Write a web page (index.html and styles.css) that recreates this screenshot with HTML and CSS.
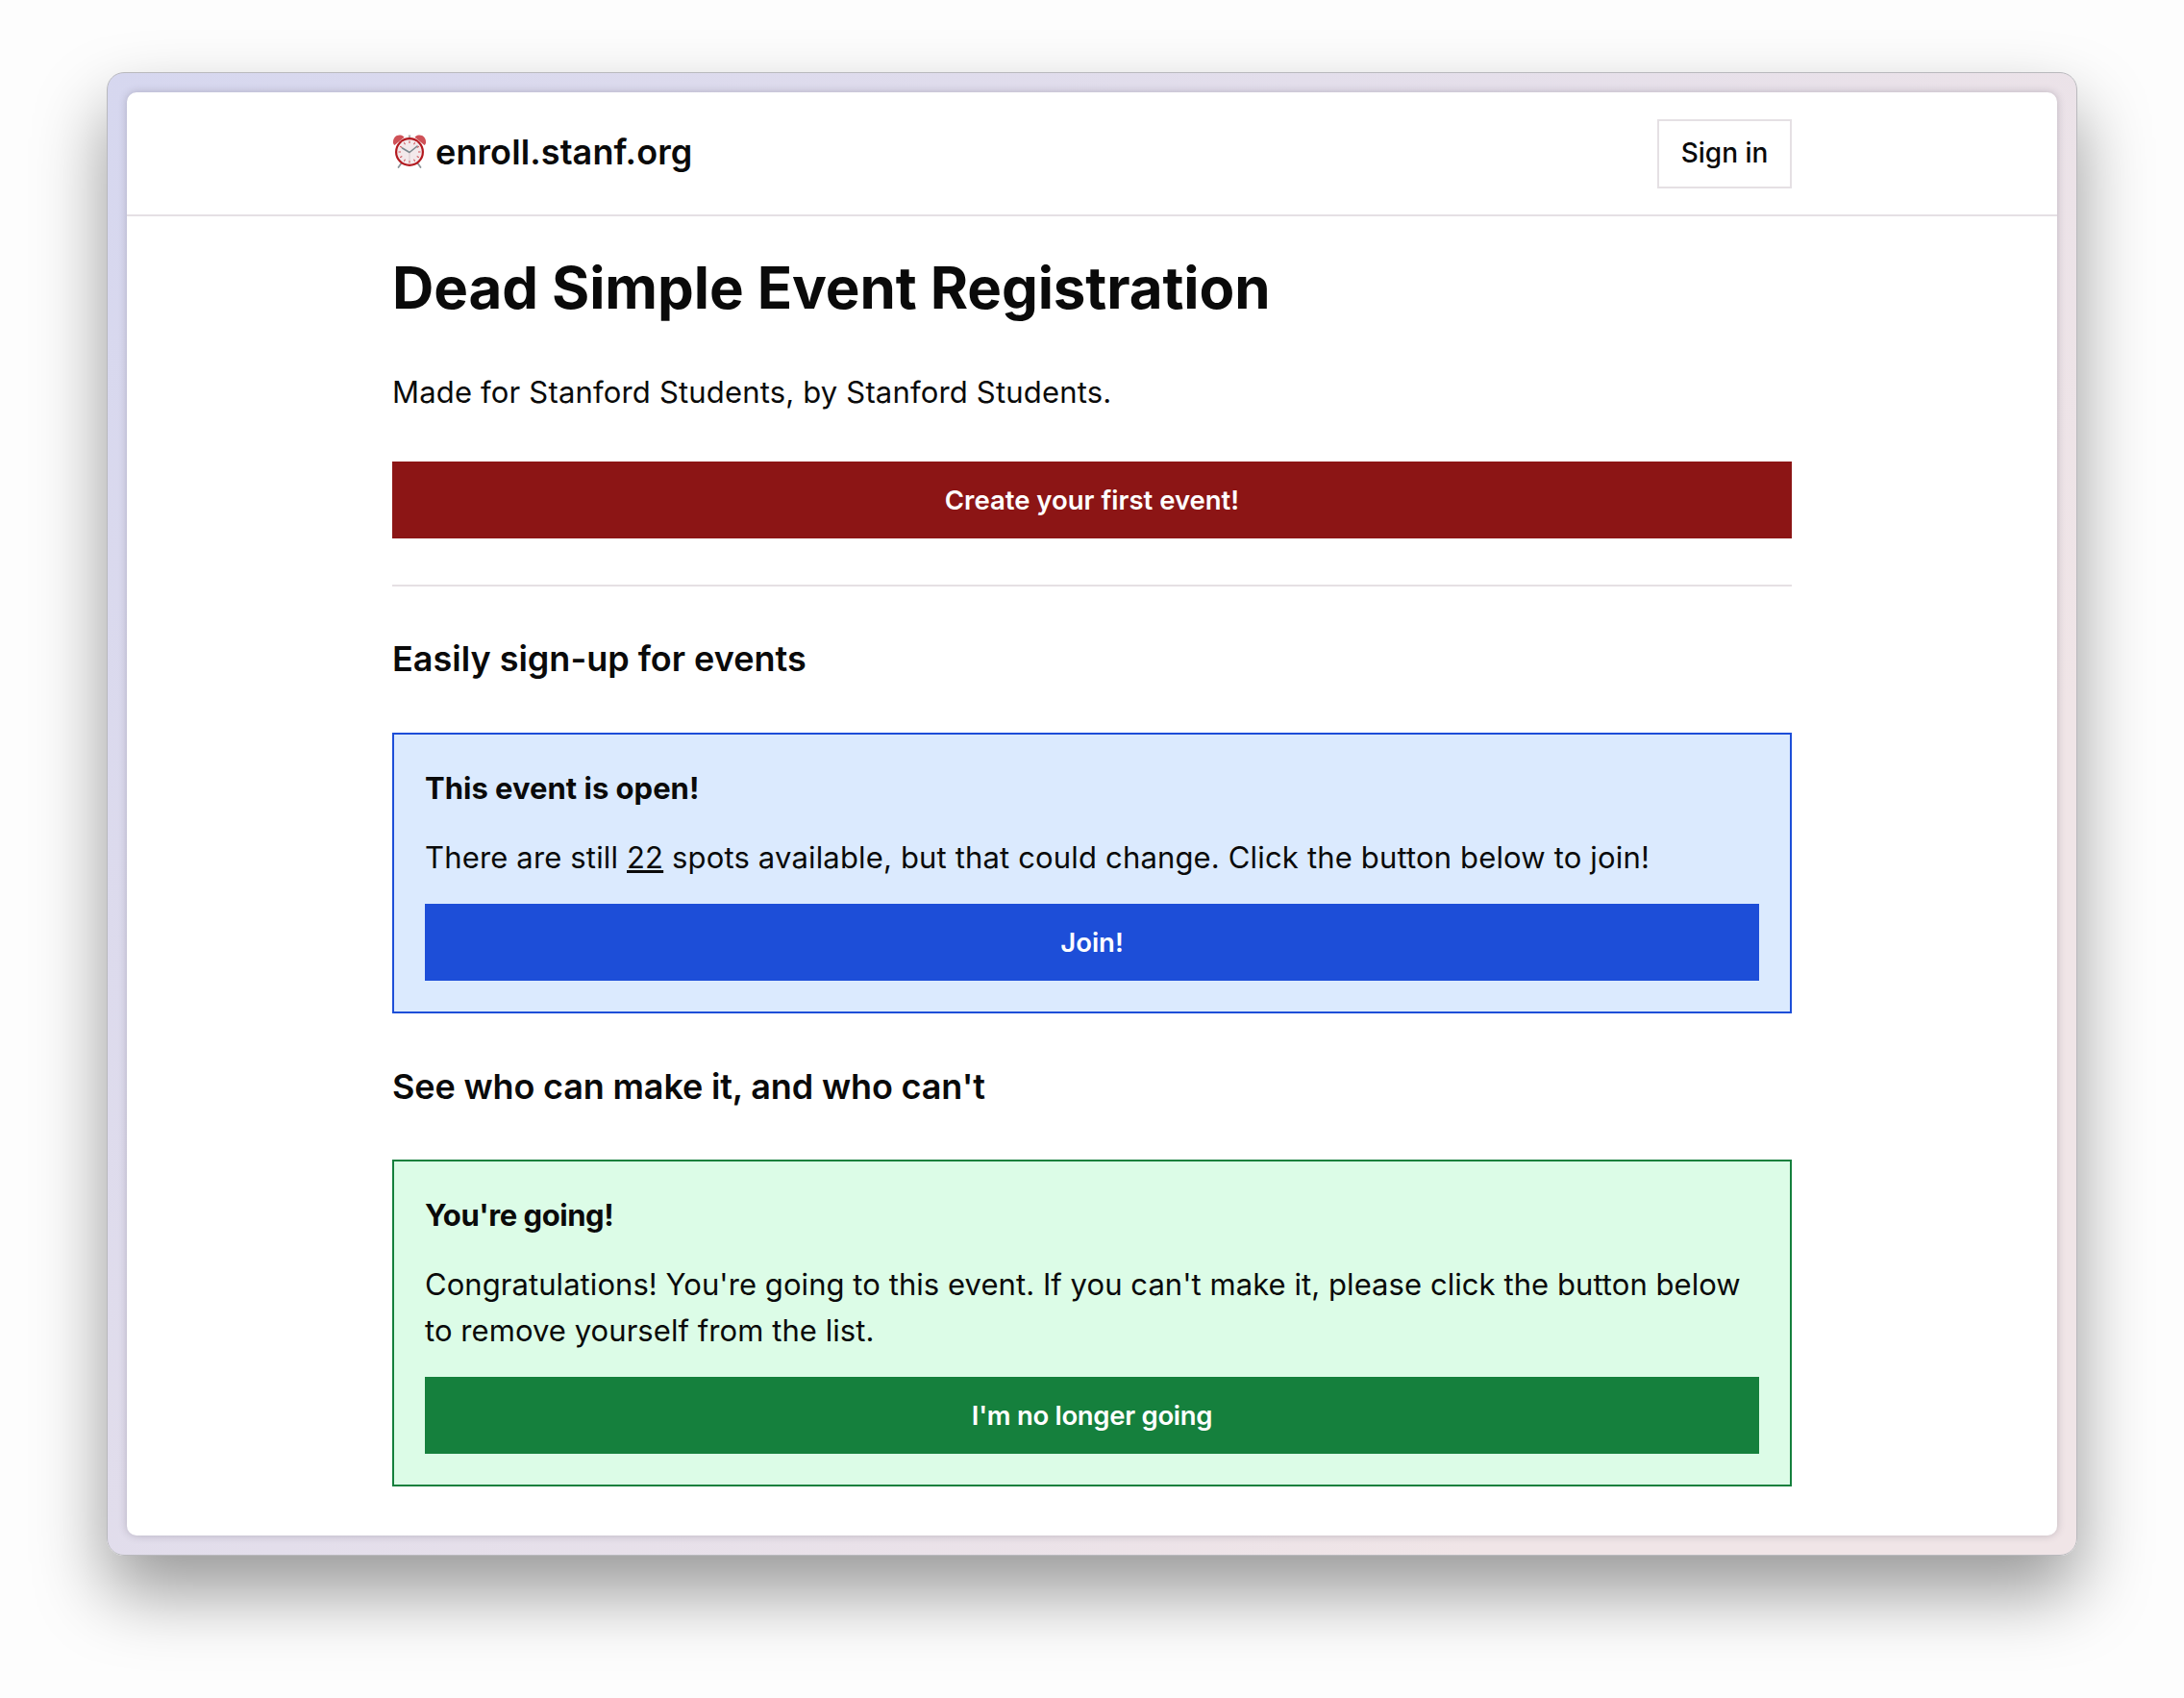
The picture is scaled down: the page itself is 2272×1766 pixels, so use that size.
FILE: index.html
```html
<!DOCTYPE html>
<html lang="en">
<head>
<meta charset="utf-8">
<title>enroll.stanf.org</title>
<link rel="stylesheet" href="styles.css">
</head>
<body>
<div class="frame">
  <div class="window">
    <header class="nav">
      <div class="nav-inner">
        <a class="brand">
          <svg class="clock" viewBox="0 0 36 36" aria-hidden="true">
            <path d="M10 30 6.500 35M26 30l3.500 5" stroke="#8d969b" stroke-width="1.800" stroke-linecap="round"/>
            <path d="M16.800 1.500h2.400v4h-2.400z" fill="#b5aeae"/>
            <path d="M1 9.500C.6 4.500 4 1 8.500 1.500c2 .3 3.500 1.300 4 2.300L2.500 12C1.700 11.500 1.100 10.600 1 9.500Z" fill="#cf5157"/>
            <path d="M35 9.500C35.400 4.500 32 1 27.500 1.500c-2 .3-3.500 1.300-4 2.300l10 8.200c.8-.5 1.400-1.400 1.500-2.500Z" fill="#cf5157"/>
            <circle cx="18" cy="19" r="15" fill="#b3191f"/>
            <circle cx="18" cy="19" r="12.800" fill="#f3e9eb"/>
            <path d="M18 7.500v2.500M18 28v2.500M6.500 19H9M27 19h2.500M12.300 9.200l1.200 2.100M23.700 9.200l-1.200 2.100M8.200 13.300l2.100 1.200M27.800 13.300l-2.100 1.200M8.200 24.700l2.100-1.200M27.800 24.700l-2.100-1.200M12.300 28.800l1.200-2.100M23.700 28.800l-1.200-2.100" stroke="#d0565c" stroke-width="1.100"/>
            <path d="M18 19v9.500" stroke="#dcc9cd" stroke-width="1"/>
            <path d="m10.500 15 7.500 4.500 8-6.500" fill="none" stroke="#7b878d" stroke-width="1.600" stroke-linecap="round" stroke-linejoin="round"/>
          </svg>
          <span>enroll.stanf.org</span>
        </a>
        <a class="signin">Sign in</a>
      </div>
    </header>
    <main class="content">
      <h1 class="title">Dead Simple Event Registration</h1>
      <p class="lead">Made for Stanford Students, by Stanford Students.</p>
      <a class="btn btn-red">Create your first event!</a>
      <hr class="rule">
      <h2 class="section-title">Easily sign-up for events</h2>
      <section class="card card-blue">
        <h3 class="card-title">This event is open!</h3>
        <p class="card-text">There are still <u>22</u> spots available, but that could change. Click the button below to join!</p>
        <a class="btn btn-blue">Join!</a>
      </section>
      <h2 class="section-title section-title-b">See who can make it, and who can't</h2>
      <section class="card card-green">
        <h3 class="card-title">You're going!</h3>
        <p class="card-text">Congratulations! You're going to this event. If you can't make it, please click the button below to remove yourself from the list.</p>
        <a class="btn btn-green">I'm no longer going</a>
      </section>
    </main>
  </div>
</div>
</body>
</html>
```
FILE: styles.css
```css
* { box-sizing: border-box; }
html, body { margin: 0; }
body {
  background: #fdfdfd;
  padding: 75px 111px 148px;
  font-family: Inter, "Liberation Sans", sans-serif;
  color: #0a0a0a;
}
.frame {
  height: 1543px;
  padding: 20px;
  border: 1px solid #b9b9bd;
  border-radius: 18px;
  background: linear-gradient(125deg, #d6d7ef 0%, #f0e5e7 80%);
  box-shadow: 0 38px 75px rgba(0, 0, 0, .4);
}
.window {
  height: 100%;
  background: #fff;
  border-radius: 10px;
  box-shadow: 0 0 8px rgba(70, 60, 80, .28);
  overflow: hidden;
}
.nav {
  height: 129px;
  border-bottom: 2px solid #e5e0e4;
}
.nav-inner, .content {
  width: 1456px;
  margin: 0 auto;
}
.nav-inner {
  height: 127px;
  display: flex;
  align-items: center;
  justify-content: space-between;
}
.brand {
  display: flex;
  align-items: center;
  gap: 9px;
  font-size: 36px;
  line-height: 40px;
  font-weight: 600;
  letter-spacing: .1px;
  padding-bottom: 3px;
}
.clock { width: 36px; height: 36px; margin-bottom: 2px; }
.signin {
  width: 140px;
  height: 72px;
  border: 2px solid #e5e0e4;
  display: flex;
  align-items: center;
  justify-content: center;
  font-size: 28px;
  font-weight: 500;
  padding-bottom: 2px;
}
.content { padding-top: 39px; }
.title {
  margin: 0;
  font-size: 60px;
  line-height: 70px;
  font-weight: 700;
  letter-spacing: -.1px;
}
.lead {
  margin: 50px 0 0;
  font-size: 31px;
  line-height: 48px;
  letter-spacing: .18px;
}
.btn {
  display: flex;
  align-items: center;
  justify-content: center;
  height: 80px;
  color: #fff;
  font-size: 27.500px;
  font-weight: 600;
}
.btn-red { background: #8c1515; margin-top: 48px; }
.btn-blue { background: #1d4ed8; }
.btn-green { background: #15803d; letter-spacing: -.3px; }
.rule {
  border: 0;
  border-top: 2px solid #e5e0e4;
  margin: 48px 0 0;
}
.section-title {
  margin: 55px 0 0;
  font-size: 36px;
  line-height: 40px;
  font-weight: 600;
}
.section-title-b { margin-top: 56px; letter-spacing: -.15px; }
.card {
  margin-top: 57px;
  padding: 32px;
  border: 2px solid;
}
.card-blue { background: #dbeafe; border-color: #1d4ed8; }
.card-green { background: #dcfce7; border-color: #15803d; margin-top: 56px; }
.card-title {
  margin: 0;
  font-size: 31px;
  line-height: 48px;
  font-weight: 700;
}
.card-green .card-title { letter-spacing: -.45px; }
.card-text {
  margin: 24px 0;
  font-size: 31px;
  line-height: 48px;
  letter-spacing: .16px;
}
.card-green .card-text { letter-spacing: .06px; }
```
